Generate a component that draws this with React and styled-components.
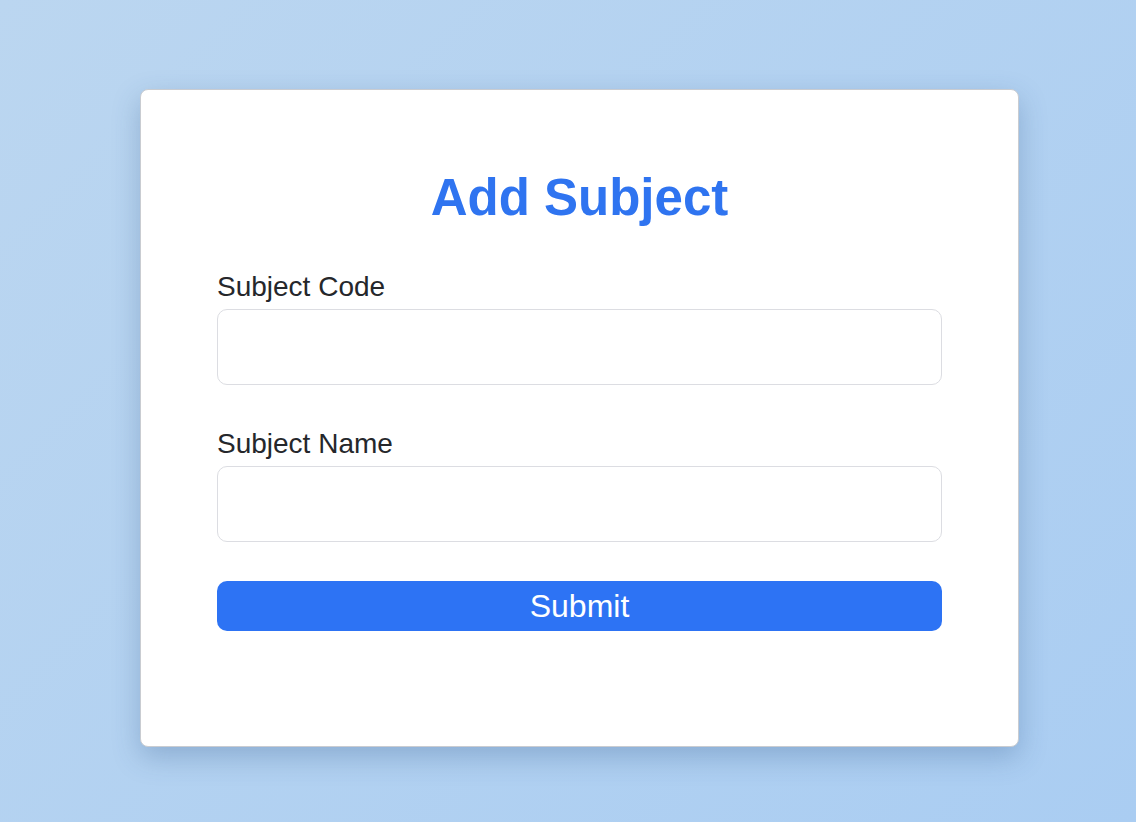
import React from "react";
import styled, { createGlobalStyle } from "styled-components";

const Global = createGlobalStyle`
  html, body { margin: 0; padding: 0; }
  body {
    font-family: "Liberation Sans", Arial, sans-serif;
    background: linear-gradient(135deg, #bbd6f0 0%, #aacdf2 100%);
    min-height: 822px;
  }
  * { box-sizing: border-box; }
`;

const Page = styled.div`
  min-height: 822px;
  display: flex;
  justify-content: flex-start;
  align-items: flex-start;
  padding: 89px 0 0 140px;
`;

const Card = styled.div`
  width: 879px;
  height: 658px;
  background: #ffffff;
  border: 1px solid #c9ccd1;
  border-radius: 8px;
  box-shadow: 0 10px 28px rgba(40, 80, 130, 0.28);
  padding: 79px 76px 0;
  display: flex;
  flex-direction: column;
`;

const Title = styled.h1`
  margin: 0;
  font-size: 51px;
  line-height: 58px;
  font-weight: 700;
  color: #2f74f0;
  text-align: center;
`;

const Form = styled.form`
  display: flex;
  flex-direction: column;
  margin-top: 44px;
`;

const Field = styled.div`
  display: flex;
  flex-direction: column;
  gap: 7px;
  margin-bottom: ${(p) => p.$gap}px;
`;

const Label = styled.label`
  font-size: 28px;
  line-height: 31px;
  color: #25272b;
`;

const Input = styled.input`
  width: 100%;
  height: 76px;
  border: 1px solid #dcdde2;
  border-radius: 10px;
  background: #fff;
  font-size: 24px;
  padding: 0 16px;
  outline: none;
  font-family: inherit;
`;

const Button = styled.button`
  width: 100%;
  height: 50px;
  border: none;
  border-radius: 10px;
  background: #2d73f4;
  color: #ffffff;
  font-family: inherit;
  font-size: 32px;
  line-height: 50px;
  padding: 0;
  cursor: pointer;
`;

export default function App() {
  return (
    <>
      <Global />
      <Page>
        <Card>
          <Title>Add Subject</Title>
          <Form onSubmit={(e) => e.preventDefault()}>
            <Field $gap={43}>
              <Label htmlFor="code">Subject Code</Label>
              <Input id="code" type="text" />
            </Field>
            <Field $gap={39}>
              <Label htmlFor="name">Subject Name</Label>
              <Input id="name" type="text" />
            </Field>
            <Button type="submit">Submit</Button>
          </Form>
        </Card>
      </Page>
    </>
  );
}
